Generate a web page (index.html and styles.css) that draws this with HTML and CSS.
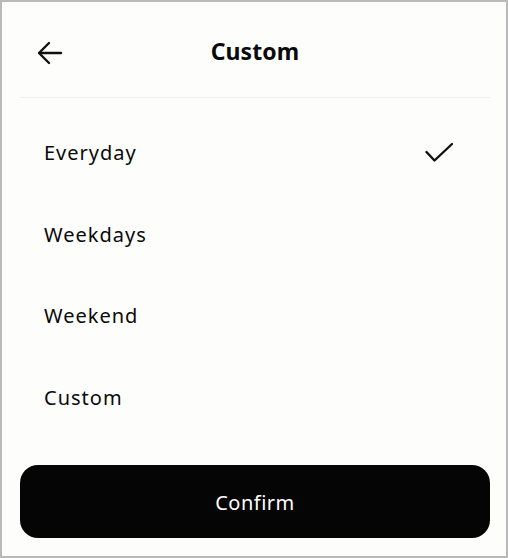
FILE: index.html
```html
<!DOCTYPE html>
<html lang="en">
<head>
    <meta charset="UTF-8" />
    <meta name="viewport" content="width=device-width, initial-scale=1.0" />
    <title>Custom</title>
    <link rel="stylesheet" href="styles.css">
</head>
<body>
    <div class="screen">
        <header class="topbar">
            <button class="back" aria-label="Back">
                <svg width="26" height="24" viewBox="0 0 26 24" fill="none" stroke="#111" stroke-width="2.4" stroke-linecap="round" stroke-linejoin="round">
                    <path d="M24 12H2.5" />
                    <path d="M12 2L2 12l10 10" />
                </svg>
            </button>
            <h1>Custom</h1>
        </header>

        <ul class="options">
            <li class="option selected">
                <span>Everyday</span>
                <svg class="check" width="28" height="22" viewBox="0 0 28 22" fill="none" stroke="#111" stroke-width="2.4" stroke-linecap="round" stroke-linejoin="round">
                    <path d="M1.5 11l8 8.5L27 3" />
                </svg>
            </li>
            <li class="option"><span>Weekdays</span></li>
            <li class="option"><span>Weekend</span></li>
            <li class="option"><span>Custom</span></li>
        </ul>

        <button class="confirm">Confirm</button>
    </div>
</body>
</html>
```

FILE: styles.css
```css
body {
    margin: 0;
    font-family: "Noto Sans", "Open Sans", sans-serif;
    color: #0a0a0a;
}

.screen {
    box-sizing: border-box;
    width: 508px;
    height: 558px;
    border: 2px solid #b9b9b9;
    background-color: #fdfdfc;
    padding: 0 16px 0 18px;
    display: flex;
    flex-direction: column;
}

.topbar {
    height: 96px;
    padding-top: 3px;
    box-sizing: border-box;
    display: flex;
    align-items: center;
    justify-content: center;
    position: relative;
    border-bottom: 1px solid #f0f0ee;
}

.topbar h1 {
    margin: 0;
    font-size: 23px;
    font-weight: 700;
    letter-spacing: 0.1px;
}

.back {
    position: absolute;
    left: 17px;
    top: 39px;
    padding: 0;
    border: none;
    background: none;
    display: flex;
}

.options {
    list-style: none;
    margin: 0;
    padding: 14px 0 0;
}

.option {
    height: 81.5px;
    padding: 0 37px 0 24px;
    display: flex;
    align-items: center;
    justify-content: space-between;
    font-size: 20px;
    letter-spacing: 1px;
}

.check {
    margin-top: -2px;
}

.confirm {
    margin-top: auto;
    margin-bottom: 18px;
    height: 73px;
    padding-top: 3px;
    border: none;
    border-radius: 18px;
    background-color: #050505;
    color: #fff;
    font-family: "Noto Sans", "Open Sans", sans-serif;
    font-size: 20px;
    letter-spacing: 0.5px;
}
```
